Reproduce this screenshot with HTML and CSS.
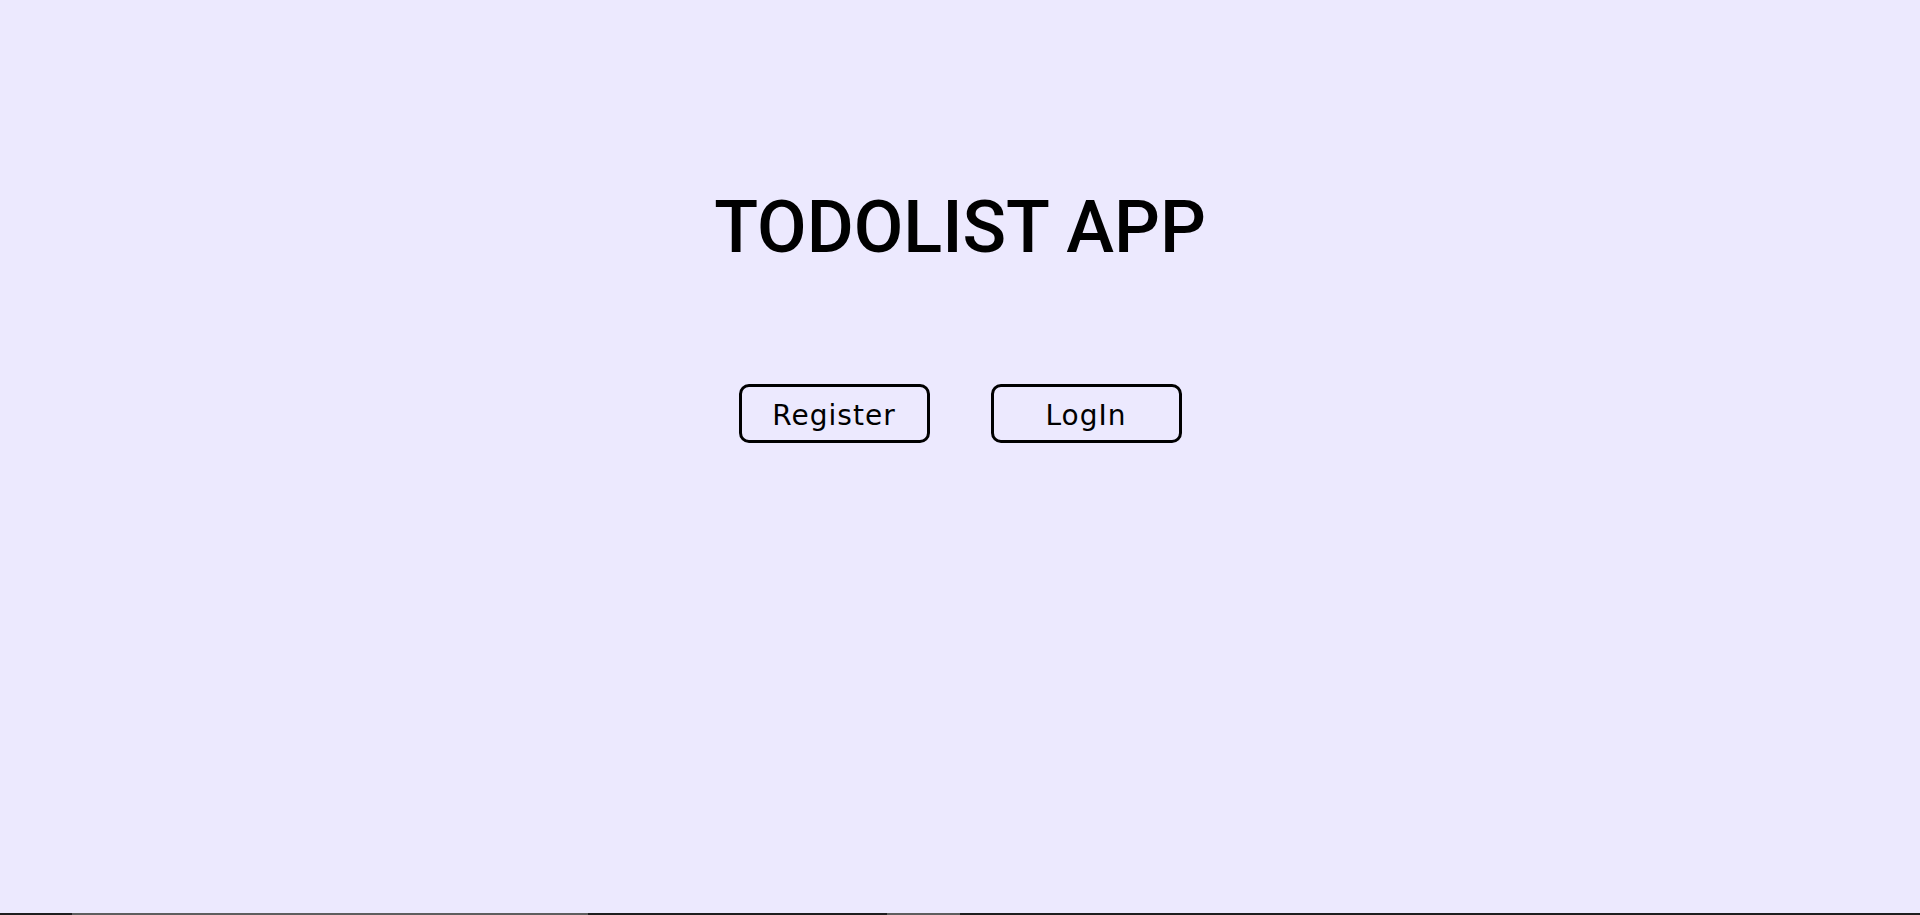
FILE: index.html
```html
<!DOCTYPE html>
<html lang="en">
<head>
<meta charset="utf-8">
<title>Todolist App</title>
<link rel="stylesheet" href="styles.css">
</head>
<body>
<div class="page">
  <main class="home">
    <h1 class="title">TODOLIST APP</h1>
    <div class="actions">
      <button class="btn" type="button">Register</button>
      <button class="btn" type="button">LogIn</button>
    </div>
  </main>
  <div class="edge">
    <span class="seg dark s1"></span>
    <span class="seg grey s2"></span>
    <span class="seg dark s3"></span>
    <span class="seg grey s4"></span>
    <span class="seg dark s5"></span>
  </div>
</div>
</body>
</html>
```

FILE: styles.css
```css
* { box-sizing: border-box; }
html, body { margin: 0; padding: 0; }
body {
  background: #ece9fe;
  font-family: Roboto, "Liberation Sans", sans-serif;
  color: #000;
}
.page {
  height: 100vh;
  display: flex;
  flex-direction: column;
}
.home {
  flex: 1;
  display: flex;
  flex-direction: column;
  align-items: center;
  padding-top: 186px;
}
.title {
  margin: 0;
  font-family: Roboto, "Liberation Sans", sans-serif;
  font-weight: 500;
  font-size: 72px;
  line-height: 84px;
  letter-spacing: 0;
}
.actions {
  display: flex;
  gap: 61px;
  margin-top: 114px;
}
.btn {
  width: 191px;
  height: 59px;
  border: 3px solid #000;
  border-radius: 10px;
  background: transparent;
  font-family: "DejaVu Sans", "Open Sans", sans-serif;
  font-size: 28px;
  letter-spacing: 1px;
  color: #000;
  padding: 3px 0 0;
  cursor: pointer;
}
.edge {
  height: 2px;
  display: flex;
}
.seg { height: 2px; }
.dark { background: #1e1e1e; }
.grey { background: #5e5e5e; }
.s1 { width: 72px; }
.s2 { width: 516px; }
.s3 { width: 299px; }
.s4 { width: 73px; }
.s5 { flex: 1; }
```
